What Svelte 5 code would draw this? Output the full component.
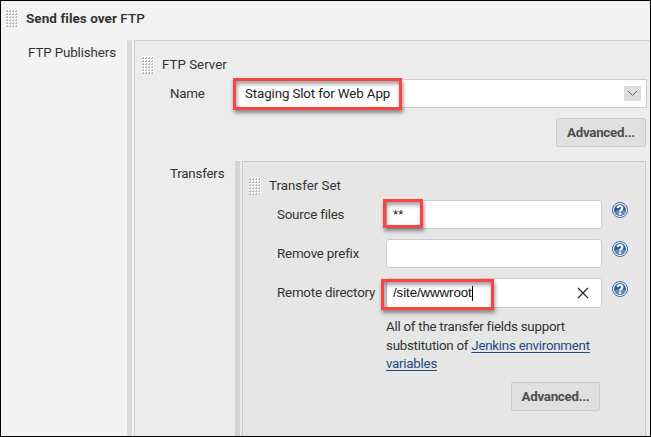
<script>
  const fields = [
    { label: 'Source files', value: '**', kind: 'source' },
    { label: 'Remove prefix', value: '', kind: 'prefix' },
    { label: 'Remote directory', value: '/site/wwwroot', kind: 'remote' }
  ];
</script>

{#snippet grip()}
  <svg class="grip" width="12" height="18" viewBox="0 0 12 18" shape-rendering="crispEdges" aria-hidden="true">
    <rect width="12" height="18" fill="#fafafa" />
    {#each [1, 4, 7, 10, 13, 16] as y}
      {#each [0, 3, 6, 9] as x}
        <path d="M{x + 1} {y}h1v2h-2v-1h1z" fill="#b4b4b4" />
      {/each}
    {/each}
  </svg>
{/snippet}

<main class="window">
  <header class="title">{@render grip()}<h1>Send files over <span>FTP</span></h1></header>
  <div class="publishers">
    <div class="side"><span>FTP Publishers</span></div>
    <div class="rail"></div>
    <section class="server">
      <div class="heading">{@render grip()}<span>FTP Server</span></div>
      <div class="name-row">
        <label for="name">Name</label>
        <div class="select" id="name">
          <span>Staging Slot for Web App</span>
          <span class="arrow">
            <svg width="17" height="15" viewBox="0 0 17 15"><path d="M4 5l4.5 4.5L13 5" fill="none" stroke="#666" /></svg>
          </span>
          <i class="mark"></i>
        </div>
      </div>
      <div class="actions"><button>Advanced...</button></div>
      <div class="transfers">
        <div class="side2"><span>Transfers</span></div>
        <div class="rail dark"></div>
        <section class="set">
          <div class="heading">{@render grip()}<span>Transfer Set</span></div>
          {#each fields as f}
            <div class="field {f.kind}">
              <span class="label">{f.label}</span>
              <div class="box">
                <span class="value">{f.value}</span>
                {#if f.kind === 'remote'}
                  <i class="caret"></i>
                  <svg class="clear" width="12" height="12" viewBox="0 0 12 12"><path d="M1 1l10 10M11 1L1 11" stroke="#222" stroke-width="1.1" /></svg>
                {/if}
                {#if f.kind !== 'prefix'}<i class="mark"></i>{/if}
              </div>
              <svg class="help" width="16" height="16" viewBox="0 0 16 16" role="img" aria-label="Help">
                <circle cx="8" cy="8" r="7.5" fill="#fff" stroke="#3d659f" />
                <circle cx="8" cy="8" r="6" fill="#315c9c" />
                <path d="M2.2 9.5A6 6 0 0 0 13.8 9Q10 6.2 2.2 9.5z" fill="#6388bd" />
                <path d="M5.7 6.1C5.7 3.5 10.4 3.4 10.4 6C10.4 7.7 8.1 7.6 8.1 9.7" fill="none" stroke="#fff" stroke-width="2" />
                <circle cx="8.1" cy="11.8" r="1.2" fill="#fff" />
              </svg>
            </div>
          {/each}
          <p>All of the transfer fields support<br />substitution of <a href="#env">Jenkins environment<br />variables</a></p>
          <div class="actions inner"><button>Advanced...</button></div>
        </section>
      </div>
    </section>
  </div>
</main>

<style>
  :global(body) { margin: 0; }
  .window { box-sizing: border-box; width: 651px; height: 437px; overflow: hidden; border: 1px solid #000; background: #f3f3f3; color: #333; font: 13.33px/18px Roboto, "Liberation Sans", sans-serif; letter-spacing: -.12px; display: flex; flex-direction: column; }
  .title { height: 39px; flex: none; display: flex; align-items: flex-start; padding: 8px 0 0 5px; box-sizing: border-box; }
  .grip { display: block; flex: none; }
  h1 { font-size: 13.5px; line-height: 18px; margin: 0 0 0 8px; font-weight: 700; letter-spacing: .05px; white-space: nowrap; }
  h1 span { font-weight: 500; }
  .publishers { flex: 1; min-height: 0; display: flex; }
  .side { width: 126px; flex: none; padding: 4px 0 0 27px; box-sizing: border-box; white-space: nowrap; }
  .rail { width: 5px; margin-right: 2px; background: #dadada; flex: none; }
  .rail.dark { background: #d3d3d3; }
  .server { flex: 1; min-width: 0; box-sizing: border-box; border: solid #d0d0d0; border-width: 1px 0 0 1px; background: #ececec; display: flex; flex-direction: column; }
  .heading { display: flex; flex: none; height: 38px; box-sizing: border-box; padding: 15px 0 0 7px; letter-spacing: 0; }
  .heading span { margin-left: 8px; line-height: 18px; }
  .name-row { display: flex; height: 29px; flex: none; }
  .name-row label { width: 64px; padding: 6px 0 0 35px; flex: none; letter-spacing: -.25px; }
  .select { width: 413px; height: 29px; box-sizing: border-box; border: 1px solid #ccc; background: #fff; position: relative; display: flex; align-items: center; justify-content: space-between; padding: 0 5px 0 10px; color: #222; }
  .arrow { width: 17px; height: 15px; background: #ddd; display: flex; }
  .mark { position: absolute; box-sizing: border-box; border: 3px solid #fa4343; box-shadow: 1px 3px 4px rgba(0,0,0,.42), inset 1px 3px 4px rgba(0,0,0,.38); }
  .select .mark { left: -2px; top: -2px; width: 169px; height: 32px; }
  .actions { height: 53px; flex: none; display: flex; justify-content: flex-end; box-sizing: border-box; padding: 10px 4px 14px 0; }
  button { width: 90px; height: 29px; box-sizing: border-box; border: 1px solid #ccc; border-radius: 2px; background: #e0e0e0; color: #4d4d4d; font: 700 13.33px/18px Roboto, "Liberation Sans", sans-serif; letter-spacing: -.28px; padding: 0; }
  .transfers { flex: 1; display: flex; min-height: 0; }
  .side2 { width: 100px; flex: none; padding: 4px 0 0 35px; box-sizing: border-box; letter-spacing: -.2px; }
  .set { width: 404px; box-sizing: border-box; border: solid #c9c9c9; border-width: 1px 1px 0; background: #e6e6e6; }
  .set .heading { padding-left: 6px; }
  .field { display: flex; height: 39px; }
  .label { width: 109px; padding: 6px 0 0 34px; box-sizing: border-box; flex: none; white-space: nowrap; letter-spacing: -.2px; }
  .box { margin-left: 34px; position: relative; width: 216px; height: 29px; box-sizing: border-box; border: 1px solid #ccc; border-radius: 3px; background: #fff; display: flex; align-items: center; padding-left: 6px; color: #111; }
  .remote .box { height: 30px; }
  .help { margin: 2px 0 0 10px; }
  .remote .help { margin-top: 3px; }
  .source .value { font: 13.33px/18px "Liberation Sans", sans-serif; letter-spacing: 0; }
  .remote .value { font: 13.33px/18px "Liberation Sans", sans-serif; letter-spacing: -.1px; }
  .source .mark { left: -4px; top: -2px; width: 40px; height: 29px; }
  .remote .mark { left: -6px; top: 0; width: 113px; height: 31px; }
  .caret { width: 1px; height: 15px; background: #000; }
  .clear { margin-left: auto; margin-right: 12px; }
  p { margin: 1px 0 0 143px; line-height: 18.67px; letter-spacing: -.25px; white-space: nowrap; }
  a { color: #204a87; text-underline-offset: 2px; }
  .actions.inner { padding: 8px 45px 0 0; }
  .actions.inner button { width: 89px; }
</style>
